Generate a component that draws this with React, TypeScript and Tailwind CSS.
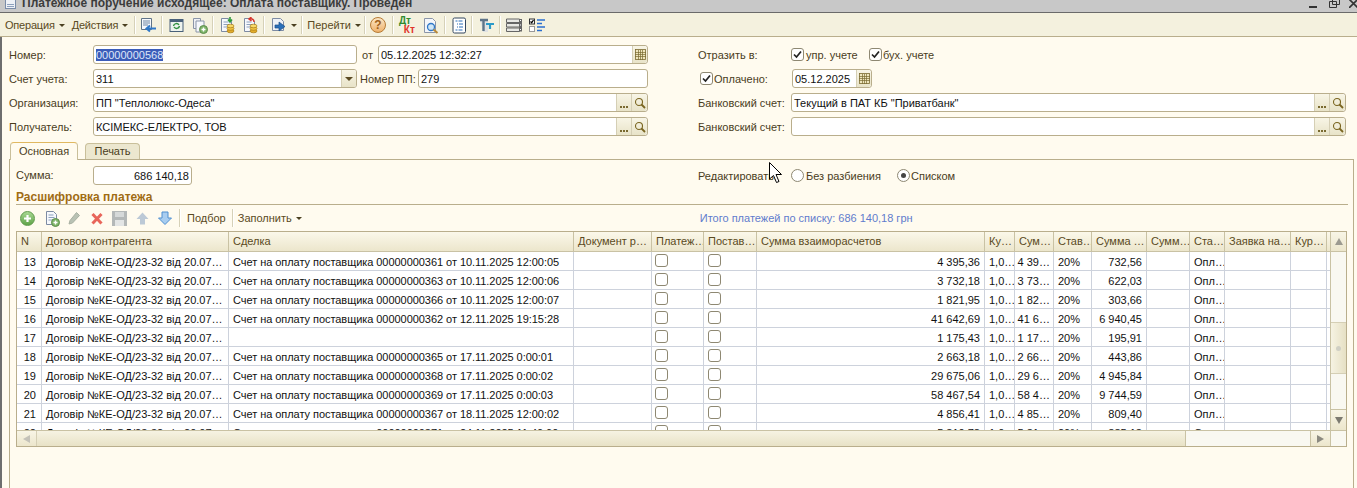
import type { ReactNode } from 'react'

const cols = [
  'w-[25px]',
  'w-[187px]',
  'w-[345px]',
  'w-[78px]',
  'w-[52px]',
  'w-[53px]',
  'w-[228px]',
  'w-[30px]',
  'w-[39px]',
  'w-[38px]',
  'w-[55px]',
  'w-[43px]',
  'w-[35px]',
  'w-[66px]',
  'w-[36px]',
  'w-[5px]',
]

const headers = [
  'N',
  'Договор контрагента',
  'Сделка',
  'Документ р…',
  'Платеж…',
  'Постав…',
  'Сумма взаиморасчетов',
  'Ку…',
  'Сум…',
  'Став…',
  'Сумма …',
  'Сумм…',
  'Ста…',
  'Заявка на…',
  'Кур…',
  '',
]

const deal = 'Счет на оплату поставщика '

const rows = [
  ['13', deal + '00000000361 от 10.11.2025 12:00:05', '4 395,36', '4 39…', '732,56'],
  ['14', deal + '00000000363 от 10.11.2025 12:00:06', '3 732,18', '3 73…', '622,03'],
  ['15', deal + '00000000366 от 10.11.2025 12:00:07', '1 821,95', '1 82…', '303,66'],
  ['16', deal + '00000000362 от 12.11.2025 19:15:28', '41 642,69', '41 6…', '6 940,45'],
  ['17', '', '1 175,43', '1 17…', '195,91'],
  ['18', deal + '00000000365 от 17.11.2025 0:00:01', '2 663,18', '2 66…', '443,86'],
  ['19', deal + '00000000368 от 17.11.2025 0:00:02', '29 675,06', '29 6…', '4 945,84'],
  ['20', deal + '00000000369 от 17.11.2025 0:00:03', '58 467,54', '58 4…', '9 744,59'],
  ['21', deal + '00000000367 от 18.11.2025 12:00:02', '4 856,41', '4 85…', '809,40'],
  ['22', deal + '00000000371 от 24.11.2025 11:40:00', '5 310,78', '5 31…', '885,13'],
]

function Caret({ className }: { className?: string }) {
  return <span className={`ml-[4px] h-0 w-0 border-x-[3px] border-t-[3px] border-x-transparent border-t-[#4a4020] ${className ?? ''}`} />
}

function Sep({ className }: { className: string }) {
  return <span className={`h-[18px] w-[2px] border-l border-r border-l-[#d6d1b8] border-r-white ${className}`} />
}

function CalendarBtn() {
  return (
    <span className="flex w-[15px] items-center justify-center self-stretch rounded-r-[3px] border-l border-[#d5cfb5] bg-gradient-to-b from-[#f8f5e6] to-[#e8e3c8]">
      <svg width="11" height="11" viewBox="0 0 11 11">
        <rect x="0.5" y="0.5" width="10" height="10" fill="#efe6bd" stroke="#7a6a30" strokeWidth="0.8" />
        <path d="M0 3.5h11M0 5.5h11M0 7.5h11M3.5 1v10M5.5 1v10M7.5 1v10" stroke="#7a6a30" strokeWidth="0.7" />
      </svg>
    </span>
  )
}

function PickBtns() {
  return (
    <>
      <span className="flex w-[15px] items-end justify-center self-stretch border-l border-[#d5cfb5] bg-gradient-to-b from-[#f8f5e6] to-[#e8e3c8] pb-[3px]">
        <span className="flex gap-[1px]">
          <span className="h-[2px] w-[2px] bg-[#7a6a30]" />
          <span className="h-[2px] w-[2px] bg-[#7a6a30]" />
          <span className="h-[2px] w-[2px] bg-[#7a6a30]" />
        </span>
      </span>
      <span className="flex w-[16px] items-center justify-center self-stretch rounded-r-[3px] border-l border-[#d5cfb5] bg-gradient-to-b from-[#f8f5e6] to-[#e8e3c8]">
        <svg width="12" height="12" viewBox="0 0 12 12" fill="none">
          <circle cx="5" cy="5" r="3.5" stroke="#7a6520" strokeWidth="1.1" />
          <path d="M7.5 7.5L11 11" stroke="#7a6520" strokeWidth="1.8" />
        </svg>
      </span>
    </>
  )
}

function Field({ className, children, after, right }: { className: string; children?: ReactNode; after?: ReactNode; right?: boolean }) {
  return (
    <div className={`flex h-[19px] items-center overflow-hidden rounded-[3px] border border-[#b9ae8c] bg-white text-[#111] ${className}`}>
      <span className={`min-w-0 flex-1 truncate px-[2px] pt-[1px] ${right ? 'text-right' : ''}`}>{children}</span>
      {after}
    </div>
  )
}

function Check({ checked, className }: { checked?: boolean; className?: string }) {
  return (
    <span className={`flex h-[13px] w-[13px] shrink-0 items-center justify-center rounded-[3px] border border-[#8e8872] bg-white ${className ?? ''}`}>
      {checked && (
        <svg width="9" height="9" viewBox="0 0 9 9" fill="none">
          <path d="M1 4.5L3.5 7L8 1.5" stroke="#222" strokeWidth="1.7" />
        </svg>
      )}
    </span>
  )
}

function Radio({ checked }: { checked?: boolean }) {
  return (
    <span className="flex h-[13px] w-[13px] shrink-0 items-center justify-center rounded-full border border-[#8e8872] bg-white">
      {checked && <span className="h-[5px] w-[5px] rounded-full bg-[#444]" />}
    </span>
  )
}

function DocIcon({ className, children }: { className?: string; children?: ReactNode }) {
  return (
    <svg className={className} width="16" height="17" viewBox="0 0 16 17" fill="none">
      <path d="M2.5 1.5h7l3 3v10h-10z" fill="#f6f8fc" stroke="#7d8ba3" />
      <path d="M4.5 5h5M4.5 7.5h6M4.5 10h6" stroke="#8da0bd" />
      {children}
    </svg>
  )
}

function PlusBadge() {
  return (
    <>
      <circle cx="11.5" cy="12.5" r="4" fill="#7fb56a" stroke="#5d8d4c" />
      <path d="M9.5 12.5h4M11.5 10.5v4" stroke="#fff" strokeWidth="1.4" />
    </>
  )
}

function Coins() {
  return (
    <>
      <ellipse cx="11.5" cy="14" rx="3.5" ry="1.8" fill="#e3ad2a" stroke="#a87a14" strokeWidth="0.7" />
      <ellipse cx="11.5" cy="11.5" rx="3.5" ry="1.8" fill="#f0c544" stroke="#a87a14" strokeWidth="0.7" />
      <ellipse cx="11.5" cy="9" rx="3.5" ry="1.8" fill="#f7d968" stroke="#a87a14" strokeWidth="0.7" />
    </>
  )
}

function MainToolbar() {
  return (
    <div className="flex h-[24px] shrink-0 items-center border-b border-[#b9ae8c] bg-[#f4f1de] pt-[1px] text-[#5a4a22]">
      <span className="ml-[5px] tracking-[-0.2px]">Операция</span>
      <Caret />
      <span className="ml-[7px] tracking-[-0.2px]">Действия</span>
      <Caret />
      <Sep className="ml-[6px]" />
      <svg className="ml-[4px]" width="17" height="17" viewBox="0 0 17 17" fill="none">
        <path d="M1.5 1.5h10v11h-10z" fill="#f6f8fc" stroke="#5f7388" />
        <path d="M3 4h7M3 6h7M3 8h5" stroke="#6f86a3" />
        <path d="M16 11.5H7M10 8.5l-3.5 3 3.5 3" stroke="#2f78c8" strokeWidth="2" />
      </svg>
      <Sep className="ml-[4px]" />
      <svg className="ml-[6px]" width="15" height="15" viewBox="0 0 15 15" fill="none">
        <rect x="1" y="1.5" width="13" height="12" fill="#eef3ee" stroke="#49617a" />
        <rect x="1" y="1.5" width="13" height="2.5" fill="#49617a" />
        <path d="M4.5 8a3 3 0 0 1 5.5-1M10.5 8a3 3 0 0 1-5.5 1" stroke="#2f8f3f" strokeWidth="1.4" />
      </svg>
      <svg className="ml-[8px]" width="16" height="17" viewBox="0 0 16 17" fill="none">
        <path d="M1.5 1.5h7v10h-7z" fill="#eef0f4" stroke="#8a95a8" />
        <path d="M4 4h8v11H4z" fill="#f6f8fc" stroke="#8a95a8" />
        <PlusBadge />
      </svg>
      <Sep className="ml-[4px]" />
      <DocIcon className="ml-[5px]">
        <Coins />
        <path d="M11 0v4M9 2.5l2 2.5 2-2.5" stroke="#2f9a3a" strokeWidth="1.6" />
      </DocIcon>
      <DocIcon className="ml-[7px]">
        <Coins />
        <path d="M12 5a3 3 0 0 0-4-3M9.5 0L7 2l2.5 2" stroke="#d8342a" strokeWidth="1.5" />
      </DocIcon>
      <Sep className="ml-[5px]" />
      <svg className="ml-[6px]" width="16" height="16" viewBox="0 0 16 16" fill="none">
        <path d="M1.5 1.5h8l3 3v9h-11z" fill="#eef1f6" stroke="#7d8ba3" />
        <path d="M4 8h4V5l6 4.5L8 14v-3H4z" fill="#2a6fb8" stroke="#1c4f88" strokeWidth="0.7" />
      </svg>
      <Caret className="-ml-[3px]" />
      <Sep className="ml-[4px]" />
      <span className="ml-[4px]">Перейти</span>
      <Caret />
      <Sep className="ml-[3px]" />
      <span className="ml-[4px] flex h-[16px] w-[16px] items-center justify-center rounded-full border border-[#b77a33] bg-gradient-to-b from-[#fbe6c4] to-[#eeb26c] text-[12px] font-bold text-[#a0601a]">?</span>
      <Sep className="ml-[6px]" />
      <span className="ml-[5px] flex h-[18px] w-[16px] flex-col text-[10px] font-bold leading-[9px]">
        <span className="text-[#2f8a2f]">Дт</span>
        <span className="self-end text-[#e0352b]">Кт</span>
      </span>
      <svg className="ml-[8px]" width="16" height="17" viewBox="0 0 16 17" fill="none">
        <path d="M1.5 1.5h8l3 3v11h-11z" fill="#f4f6fa" stroke="#8a95a8" />
        <circle cx="8" cy="10" r="3.5" fill="#cfe6f7" stroke="#2f78c8" strokeWidth="1.3" />
        <path d="M10.5 12.5L14.5 16" stroke="#b98a3a" strokeWidth="2" />
      </svg>
      <Sep className="ml-[5px]" />
      <svg className="ml-[6px]" width="15" height="17" viewBox="0 0 15 17" fill="none">
        <rect x="1" y="1" width="12.5" height="15" rx="1.5" fill="#fff" stroke="#33475f" />
        <path d="M3.5 4h2M6.5 4h4M5 7h1M7 7h4M5 10h1M7 10h4M3.5 13h2M6.5 13h4" stroke="#2a6fb8" />
      </svg>
      <Sep className="ml-[4px]" />
      <svg className="ml-[6px]" width="15" height="15" viewBox="0 0 15 15" fill="none">
        <path d="M1 1h8v13H4z" fill="#dfe2e4" />
        <path d="M1 2h8M4.5 2v11" stroke="#5e7488" strokeWidth="2.4" />
        <path d="M7 6h8M11 6v5" stroke="#2a9ac8" strokeWidth="2.2" />
      </svg>
      <Sep className="ml-[5px]" />
      <svg className="ml-[5px]" width="17" height="15" viewBox="0 0 17 15" fill="none">
        <path d="M.5 1h13v3.5H.5zM.5 5.5h13V9H.5zM.5 10h13v3.5H.5z" fill="#e8e8e4" stroke="#666" />
        <rect x="13" y="1" width="3" height="12.5" fill="#666" />
        <path d="M14.5 2v1M14.5 6.5v1M14.5 11v1" stroke="#fff" />
      </svg>
      <svg className="ml-[6px]" width="17" height="15" viewBox="0 0 17 15" fill="none">
        <rect x="0.5" y="1" width="5" height="5" fill="#fff" stroke="#333" />
        <path d="M1.5 3.5l1.2 1.2L4.5 2" stroke="#000" strokeWidth="1.2" />
        <rect x="0.5" y="8.5" width="5" height="5" fill="#fff" stroke="#999" />
        <path d="M8 2h8M8 5.5h5M8 9h8M8 12.5h5" stroke="#2a6fd0" strokeWidth="1.6" />
      </svg>
    </div>
  )
}

function HeaderForm() {
  return (
    <div className="flex shrink-0 pt-[8px]">
      {/* left block */}
      <div className="ml-[6px] flex w-[640px] flex-col gap-[5px]">
        <div className="flex items-center">
          <span className="w-[85px] pl-[1px] pt-[1px]">Номер:</span>
          <Field className="w-[264px]">
            <span className="bg-[#3b5cb8] text-[#dfe6f8]">00000000568</span>
          </Field>
          <span className="ml-[5px] w-[16px] pt-[1px]">от</span>
          <Field className="w-[270px]" after={<CalendarBtn />}>05.12.2025 12:32:27</Field>
        </div>
        <div className="flex items-center">
          <span className="w-[85px] pl-[1px] pt-[1px]">Счет учета:</span>
          <Field
            className="w-[264px]"
            after={
              <span className="flex w-[15px] items-center justify-center self-stretch border-l border-[#d5cfb5] bg-gradient-to-b from-[#f8f5e6] to-[#e8e3c8]">
                <span className="h-0 w-0 border-x-[4px] border-t-[4px] border-x-transparent border-t-[#5a4a22]" />
              </span>
            }
          >
            311
          </Field>
          <span className="ml-[3px] w-[58px] pt-[1px]">Номер ПП:</span>
          <Field className="w-[230px]">279</Field>
        </div>
        <div className="flex items-center">
          <span className="w-[85px] pl-[1px] pt-[1px]">Организация:</span>
          <Field className="w-[555px]" after={<PickBtns />}>ПП "Теплолюкс-Одеса"</Field>
        </div>
        <div className="flex items-center">
          <span className="w-[85px] pl-[1px] pt-[1px]">Получатель:</span>
          <Field className="w-[555px]" after={<PickBtns />}>КСІМЕКС-ЕЛЕКТРО, ТОВ</Field>
        </div>
      </div>
      {/* right block */}
      <div className="ml-[50px] flex w-[648px] flex-col gap-[5px]">
        <div className="flex h-[19px] items-center">
          <span className="w-[93px] pt-[1px]">Отразить в:</span>
          <Check checked />
          <span className="ml-[2px] w-[63px] pt-[1px]">упр. учете</span>
          <Check checked />
          <span className="ml-[1px] pt-[1px]">бух. учете</span>
        </div>
        <div className="flex items-center">
          <Check checked className="ml-[2px]" />
          <span className="ml-[1px] w-[78px] pt-[1px]">Оплачено:</span>
          <Field className="w-[80px]" after={<CalendarBtn />}>05.12.2025</Field>
        </div>
        <div className="flex items-center">
          <span className="w-[93px] pt-[1px]">Банковский счет:</span>
          <Field className="w-[555px]" after={<PickBtns />}>Текущий в ПАТ КБ "Приватбанк"</Field>
        </div>
        <div className="flex items-center">
          <span className="w-[93px] pt-[1px]">Банковский счет:</span>
          <Field className="w-[555px]" after={<PickBtns />} />
        </div>
      </div>
    </div>
  )
}

function GridToolbar() {
  return (
    <div className="mt-[2px] flex h-[22px] items-center text-[#5a4a22]">
      <span className="ml-[4px] flex h-[15px] w-[15px] items-center justify-center rounded-full border border-[#5f9a4c] bg-gradient-to-b from-[#a8d892] to-[#5fa348]">
        <svg width="9" height="9" viewBox="0 0 9 9"><path d="M4.5 1v7M1 4.5h7" stroke="#fff" strokeWidth="2.2" /></svg>
      </span>
      <DocIcon className="ml-[9px]"><PlusBadge /></DocIcon>
      <svg className="ml-[8px]" width="12" height="14" viewBox="0 0 12 14" fill="none">
        <path d="M8.5 1.5l3 3-7 7.5-3.5 1 1-3.5z" fill="#b9c2b4" stroke="#a8b0a2" />
      </svg>
      <svg className="ml-[11px]" width="12" height="13" viewBox="0 0 12 13" fill="none">
        <path d="M1.5 2l9 9.5M10.5 2l-9 9.5" stroke="#e8655a" strokeWidth="3" />
      </svg>
      <svg className="ml-[9px]" width="15" height="15" viewBox="0 0 15 15">
        <path d="M0 0h15v15H0z" fill="#b4b8b8" />
        <path d="M3 1h9v5H3z" fill="#d6d9d9" />
        <path d="M3 9h9v6H3z" fill="#e3e5e5" />
      </svg>
      <svg className="ml-[9px]" width="13" height="13" viewBox="0 0 13 13">
        <path d="M6.5 0.5L12.5 7H9v5.5H4V7H0.5z" fill="#bcc9d6" />
      </svg>
      <svg className="ml-[9px]" width="14" height="14" viewBox="0 0 14 14">
        <path d="M7 13.5L13.5 7H10V1H4v6H0.5z" fill="#a8cdf0" stroke="#4f8fd0" />
      </svg>
      <Sep className="ml-[7px]" />
      <span className="ml-[6px]">Подбор</span>
      <Sep className="ml-[6px]" />
      <span className="ml-[4px]">Заполнить</span>
      <Caret />
      <span className="ml-[398px] text-[#5f7ccd]">Итого платежей по списку: 686 140,18 грн</span>
    </div>
  )
}

function PaymentGrid() {
  return (
    <div className="mt-[2px] flex h-[216px] w-[1331px] flex-col border border-[#b9ae8c] bg-white">
      <div className="flex min-h-0 flex-1">
        <div className="min-w-0 flex-1 overflow-hidden">
          <div className="flex h-[20px] border-b border-[#c9c2a4] bg-gradient-to-b from-[#fbf8ea] to-[#ece6cc] text-[#5a4a22]">
            {headers.map((h, i) => (
              <div key={i} className={`${cols[i]} shrink-0 overflow-hidden whitespace-nowrap border-r border-[#c9c2a4] pl-[4px] leading-[19px]`}>
                {h}
              </div>
            ))}
          </div>
          {rows.map((r) => (
            <div key={r[0]} className="flex h-[19px] border-b border-[#cdd2dc] leading-[20px] text-[#111]">
              <div className={`${cols[0]} shrink-0 border-r border-[#cdd2dc] pr-[5px] text-right`}>{r[0]}</div>
              <div className={`${cols[1]} shrink-0 overflow-hidden whitespace-nowrap border-r border-[#cdd2dc] pl-[4px]`}>Договір №КЕ-ОД/23-32 від 20.07…</div>
              <div className={`${cols[2]} shrink-0 overflow-hidden whitespace-nowrap border-r border-[#cdd2dc] pl-[4px] tracking-[-0.05px]`}>{r[1]}</div>
              <div className={`${cols[3]} shrink-0 border-r border-[#cdd2dc]`} />
              <div className={`${cols[4]} shrink-0 border-r border-[#cdd2dc] pl-[3px] pt-[2px]`}><Check /></div>
              <div className={`${cols[5]} shrink-0 border-r border-[#cdd2dc] pl-[4px] pt-[2px]`}><Check /></div>
              <div className={`${cols[6]} shrink-0 border-r border-[#cdd2dc] pr-[4px] text-right`}>{r[2]}</div>
              <div className={`${cols[7]} shrink-0 overflow-hidden whitespace-nowrap border-r border-[#cdd2dc] pl-[4px]`}>1,0…</div>
              <div className={`${cols[8]} shrink-0 overflow-hidden whitespace-nowrap border-r border-[#cdd2dc] pr-[3px] text-right`}>{r[3]}</div>
              <div className={`${cols[9]} shrink-0 border-r border-[#cdd2dc] pl-[4px]`}>20%</div>
              <div className={`${cols[10]} shrink-0 whitespace-nowrap border-r border-[#cdd2dc] pr-[4px] text-right`}>{r[4]}</div>
              <div className={`${cols[11]} shrink-0 border-r border-[#cdd2dc]`} />
              <div className={`${cols[12]} shrink-0 overflow-hidden whitespace-nowrap border-r border-[#cdd2dc] pl-[4px]`}>Опл…</div>
              <div className={`${cols[13]} shrink-0 border-r border-[#cdd2dc]`} />
              <div className={`${cols[14]} shrink-0 border-r border-[#cdd2dc]`} />
              <div className={`${cols[15]} shrink-0 border-r border-[#cdd2dc]`} />
            </div>
          ))}
        </div>
        {/* vertical scrollbar */}
        <div className="flex w-[16px] shrink-0 flex-col border-l border-[#c9c2a4] bg-[#f9f8f1]">
          <div className="flex h-[20px] items-center justify-center border-b border-[#c9c2a4] bg-gradient-to-b from-[#f8f5e6] to-[#ece6cc]">
            <span className="h-0 w-0 border-x-[4px] border-b-[7px] border-x-transparent border-b-[#9c9a90]" />
          </div>
          <div className="h-[70px]" />
          <div className="flex h-[52px] items-center justify-center border-y border-[#d5cfb5] bg-gradient-to-r from-[#f6f3e3] to-[#e6e0c4]">
            <span className="h-[5px] w-[5px] rounded-full bg-[#cfcfc4]" />
          </div>
          <div className="flex-1" />
          <div className="flex h-[21px] items-center justify-center border-t border-[#c9c2a4] bg-gradient-to-b from-[#f8f5e6] to-[#ece6cc]">
            <span className="h-0 w-0 border-x-[4px] border-t-[7px] border-x-transparent border-t-[#7c7a70]" />
          </div>
        </div>
      </div>
      {/* horizontal scrollbar */}
      <div className="flex h-[16px] shrink-0 border-t border-[#c9c2a4] bg-[#f9f8f1]">
        <div className="flex w-[20px] items-center justify-center border-r border-[#d5cfb5] bg-gradient-to-b from-[#f8f5e6] to-[#ece6cc]">
          <span className="h-0 w-0 border-y-[4px] border-r-[7px] border-y-transparent border-r-[#c4c2b8]" />
        </div>
        <div className="w-[1149px] border-r border-[#c9c2a4] bg-gradient-to-b from-[#f6f3e3] to-[#e8e2c6]" />
        <div className="w-[124px]" />
        <div className="flex w-[21px] items-center justify-center border-x border-[#c9c2a4] bg-gradient-to-b from-[#f8f5e6] to-[#ece6cc]">
          <span className="h-0 w-0 border-y-[4px] border-l-[7px] border-y-transparent border-l-[#8c8a80]" />
        </div>
      </div>
    </div>
  )
}

export default function App() {
  return (
    <div className="relative flex h-[488px] w-[1357px] flex-col overflow-hidden bg-[#fffbef] font-['Liberation_Sans',Arial,sans-serif] text-[11px] leading-[13px] text-[#4a3d1c]">
      {/* window title, cut by the top of the shot */}
      <div className="flex h-[13px] shrink-0 items-end overflow-hidden border-b border-[#6a6a6a] bg-[#c8c8c8]">
        <span className="mb-[3px] ml-[5px] flex h-[10px] w-[11px] flex-col justify-end gap-[1px] border border-[#7a8ca8] bg-[#eef1f6] px-[1px] pb-[1px]">
          <span className="h-[1px] bg-[#8da0bd]" />
          <span className="h-[1px] bg-[#8da0bd]" />
        </span>
        <span className="mb-[2px] ml-[6px] text-[12px] font-bold leading-[14px] text-[#3c3c3c]">Платежное поручение исходящее: Оплата поставщику. Проведен</span>
        <span className="mb-[4px] ml-auto h-[2px] w-[8px] bg-[#333]" />
        <svg className="mb-[4px] ml-[12px]" width="11" height="10" viewBox="0 0 11 10" fill="none">
          <path d="M3.5 0.5h7v6h-7zM0.5 3.5h7v6h-7z" fill="#c8c8c8" stroke="#333" />
        </svg>
        <svg className="-mr-[1px] mb-[4px] ml-[9px]" width="9" height="9" viewBox="0 0 9 9" fill="none">
          <path d="M0 0l9 9M9 0L0 9" stroke="#333" strokeWidth="1.6" />
        </svg>
      </div>
      <MainToolbar />

      <div className="flex min-h-0 flex-1 border-l-2 border-[#6e6e6e]">
        <div className="flex min-w-0 flex-1 flex-col">
          <HeaderForm />

          {/* tabs */}
          <div className="ml-[8px] mt-[6px] flex h-[17px] shrink-0 items-end">
            <div className="z-10 -mb-[1px] flex h-[18px] w-[68px] items-center justify-center rounded-t-[4px] border border-b-0 border-[#c9bf9a] border-t-[#e0b860] bg-[#fffbef]">Основная</div>
            <div className="ml-[7px] flex h-[16px] w-[55px] items-center justify-center rounded-t-[4px] border border-b-0 border-[#c9bf9a] bg-[#ece7cf]">Печать</div>
          </div>

          {/* page frame */}
          <div className="ml-[7px] mr-[3px] flex min-h-0 flex-1 flex-col border-x border-t border-[#b9ae8c] pl-[6px] pt-[6px]">
            <div className="flex h-[19px] shrink-0 items-center">
              <span className="w-[77px]">Сумма:</span>
              <Field className="w-[99px]" right>686 140,18</Field>
              <span className="ml-[506px] w-[93px] pt-[1px]">Редактировать:</span>
              <Radio />
              <span className="ml-[2px] w-[91px] pt-[1px]">Без разбиения</span>
              <Radio checked />
              <span className="ml-[1px] pt-[1px]">Списком</span>
            </div>

            <div className="mt-[5px] w-[1332px] shrink-0 border-b border-[#b9ae8c] text-[12px] font-bold leading-[14px] text-[#a06c14]">Расшифровка платежа</div>
            <GridToolbar />
            <PaymentGrid />
          </div>
        </div>
      </div>

      {/* mouse pointer */}
      <svg className="absolute left-[769px] top-[162px]" width="14" height="22" viewBox="0 0 14 22" fill="none">
        <path d="M0.5 0.5V17L4.5 13.5L7.5 20.5L10 19.5L7 12.5H12.5z" fill="#fff" stroke="#000" />
      </svg>
    </div>
  )
}
